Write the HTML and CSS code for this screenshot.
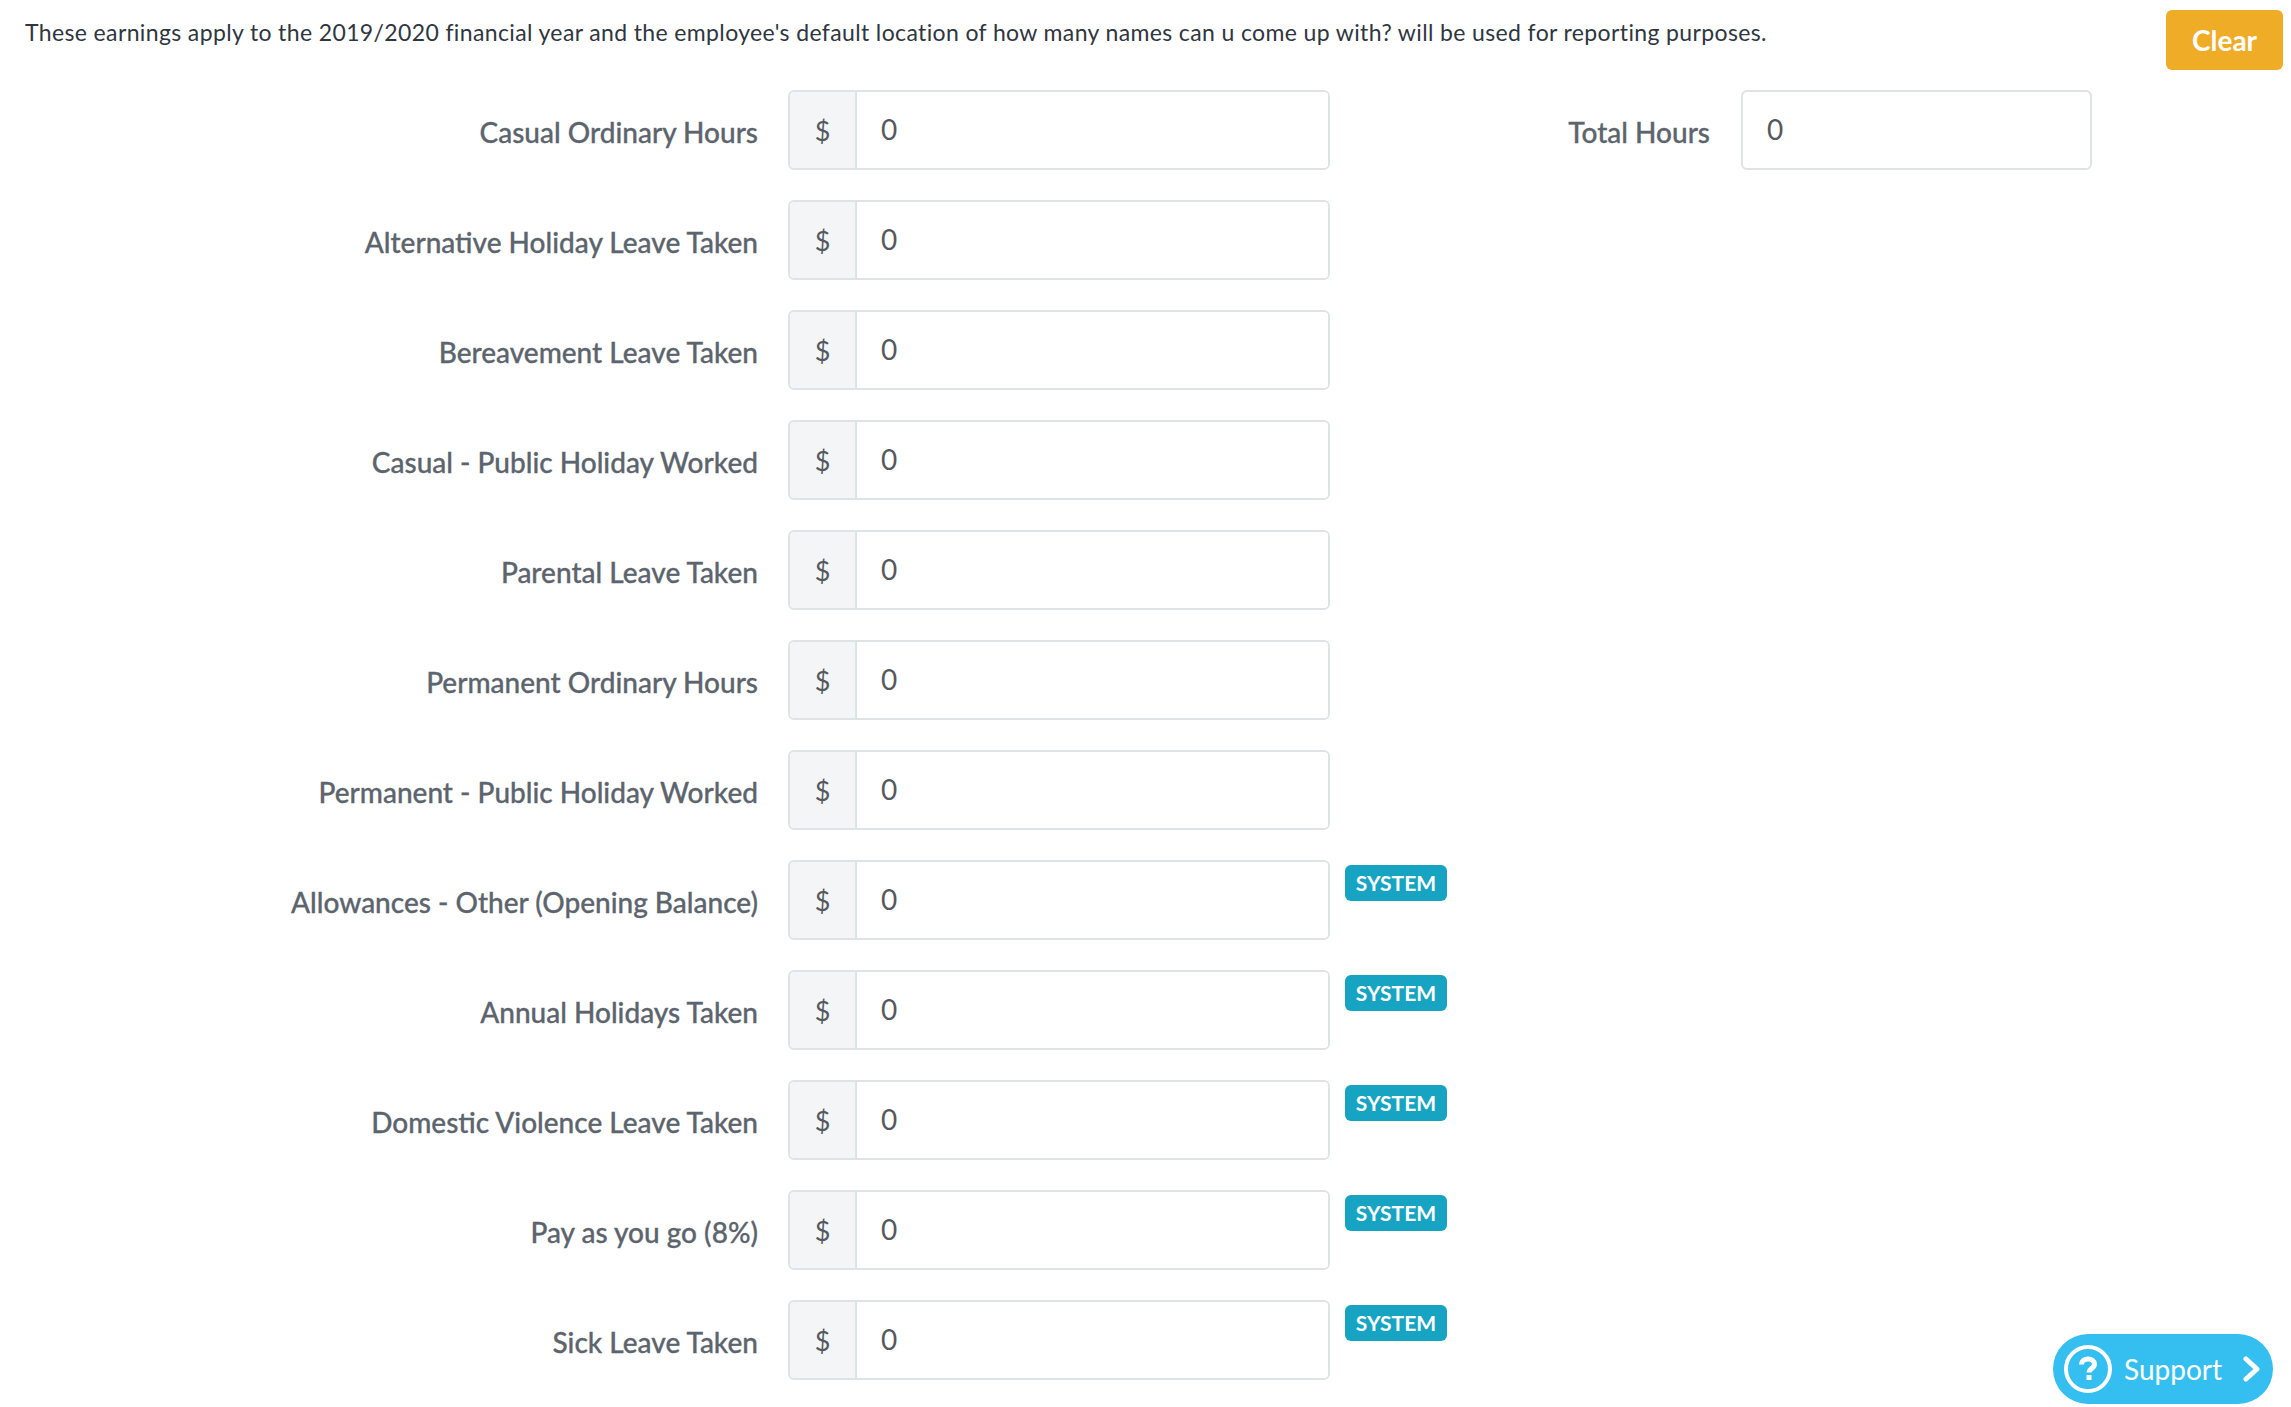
FILE: index.html
```html
<!DOCTYPE html>
<html lang="en">
<head>
<meta charset="utf-8">
<title>Earnings</title>
<link rel="stylesheet" href="styles.css">
</head>
<body>
<header class="intro">
  <p class="intro-text">These earnings apply to the 2019/2020 financial year and the employee's default location of how many names can u come up with? will be used for reporting purposes.</p>
  <button class="clear" type="button">Clear</button>
</header>
<main class="form">
  <section class="rows">
    <div class="row"><label class="label">Casual Ordinary Hours</label><div class="group"><span class="addon">$</span><input class="input" value="0"></div></div>
    <div class="row"><label class="label">Alternative Holiday Leave Taken</label><div class="group"><span class="addon">$</span><input class="input" value="0"></div></div>
    <div class="row"><label class="label">Bereavement Leave Taken</label><div class="group"><span class="addon">$</span><input class="input" value="0"></div></div>
    <div class="row"><label class="label">Casual - Public Holiday Worked</label><div class="group"><span class="addon">$</span><input class="input" value="0"></div></div>
    <div class="row"><label class="label">Parental Leave Taken</label><div class="group"><span class="addon">$</span><input class="input" value="0"></div></div>
    <div class="row"><label class="label">Permanent Ordinary Hours</label><div class="group"><span class="addon">$</span><input class="input" value="0"></div></div>
    <div class="row"><label class="label">Permanent - Public Holiday Worked</label><div class="group"><span class="addon">$</span><input class="input" value="0"></div></div>
    <div class="row"><label class="label">Allowances - Other (Opening Balance)</label><div class="group"><span class="addon">$</span><input class="input" value="0"></div><span class="badge">SYSTEM</span></div>
    <div class="row"><label class="label">Annual Holidays Taken</label><div class="group"><span class="addon">$</span><input class="input" value="0"></div><span class="badge">SYSTEM</span></div>
    <div class="row"><label class="label">Domestic Violence Leave Taken</label><div class="group"><span class="addon">$</span><input class="input" value="0"></div><span class="badge">SYSTEM</span></div>
    <div class="row"><label class="label">Pay as you go (8%)</label><div class="group"><span class="addon">$</span><input class="input" value="0"></div><span class="badge">SYSTEM</span></div>
    <div class="row"><label class="label">Sick Leave Taken</label><div class="group"><span class="addon">$</span><input class="input" value="0"></div><span class="badge">SYSTEM</span></div>
  </section>
  <aside class="total">
    <label class="label total-label">Total Hours</label>
    <input class="input total-input" value="0">
  </aside>
</main>
<a class="support">
  <svg class="support-icon" width="48" height="48" viewBox="0 0 48 48" aria-hidden="true">
    <circle cx="24" cy="24" r="22" fill="none" stroke="#fff" stroke-width="4"/>
    <path d="M17.500 19.500c0-3.500 2.800-5.500 6.500-5.500 3.800 0 6.500 2 6.500 5 0 4.500-5.500 4.500-5.500 8.500" fill="none" stroke="#fff" stroke-width="5"/>
    <rect x="22.500" y="30" width="5" height="5" fill="#fff"/>
  </svg>
  <span class="support-text">Support</span>
  <svg class="support-chevron" width="18" height="26" viewBox="0 0 18 26" aria-hidden="true">
    <path d="M3 3l11 10L3 23" fill="none" stroke="#fff" stroke-width="5" stroke-linecap="round" stroke-linejoin="round"/>
  </svg>
</a>
</body>
</html>
```
FILE: styles.css
```css
* { box-sizing: border-box; }
html, body { margin: 0; padding: 0; background: #fff; }
body {
  width: 2291px;
  height: 1407px;
  overflow: hidden;
  font-family: "Lato", "Liberation Sans", sans-serif;
}
.intro {
  display: flex;
  justify-content: space-between;
  align-items: flex-start;
  padding: 10px 8px 0 25px;
}
.intro-text {
  margin: 0;
  padding-top: 6px;
  font-size: 23px;
  line-height: 32px;
  letter-spacing: 0.37px;
  color: #2f3640;
}
.clear {
  width: 117px;
  height: 60px;
  border: 0;
  border-radius: 6px;
  background: #efac26;
  color: #fff;
  font-family: inherit;
  font-size: 28px;
  font-weight: 700;
  padding: 0;
}
.form {
  display: flex;
  margin-top: 20px;
}
.rows { width: 1500px; flex: none; }
.row {
  display: flex;
  align-items: flex-start;
  height: 80px;
  margin-bottom: 30px;
}
.label {
  width: 758px;
  flex: none;
  padding-top: 24px;
  text-align: right;
  font-size: 28px;
  line-height: 36px;
  font-weight: 500;
  color: #5c646d;
  -webkit-text-stroke: 0.3px #5c646d;
}
.group {
  display: flex;
  width: 542px;
  height: 80px;
  margin-left: 30px;
  border: 2px solid #dde3e7;
  border-radius: 6px;
  overflow: hidden;
}
.addon {
  display: flex;
  align-items: center;
  justify-content: center;
  width: 67px;
  flex: none;
  background: #f3f5f7;
  border-right: 2px solid #dde3e7;
  font-size: 27px;
  color: #55595e;
}
.input {
  flex: 1;
  min-width: 0;
  border: 0;
  outline: 0;
  padding: 0 0 2px 24px;
  background: #fff;
  font-family: inherit;
  font-size: 28px;
  color: #55595e;
}
.badge {
  display: flex;
  align-items: center;
  justify-content: center;
  width: 102px;
  height: 36px;
  margin: 5px 0 0 15px;
  padding-bottom: 2px;
  border-radius: 6px;
  background: #17a3c2;
  color: #fff;
  font-size: 21px;
  font-weight: 700;
}
.total {
  display: flex;
  align-items: flex-start;
  height: 80px;
}
.total-label { width: 210px; }
.total-input {
  flex: none;
  width: 351px;
  height: 80px;
  margin-left: 31px;
  border: 2px solid #dde3e7;
  border-radius: 6px;
}
.support {
  position: fixed;
  left: 2053px;
  top: 1334px;
  display: flex;
  align-items: center;
  width: 220px;
  height: 70px;
  padding-left: 11px;
  border-radius: 35px;
  background: #35bff0;
  color: #fff;
}
.support-icon { flex: none; }
.support-text {
  margin-left: 12px;
  font-size: 28px;
}
.support-chevron { margin-left: 21px; flex: none; }
```
